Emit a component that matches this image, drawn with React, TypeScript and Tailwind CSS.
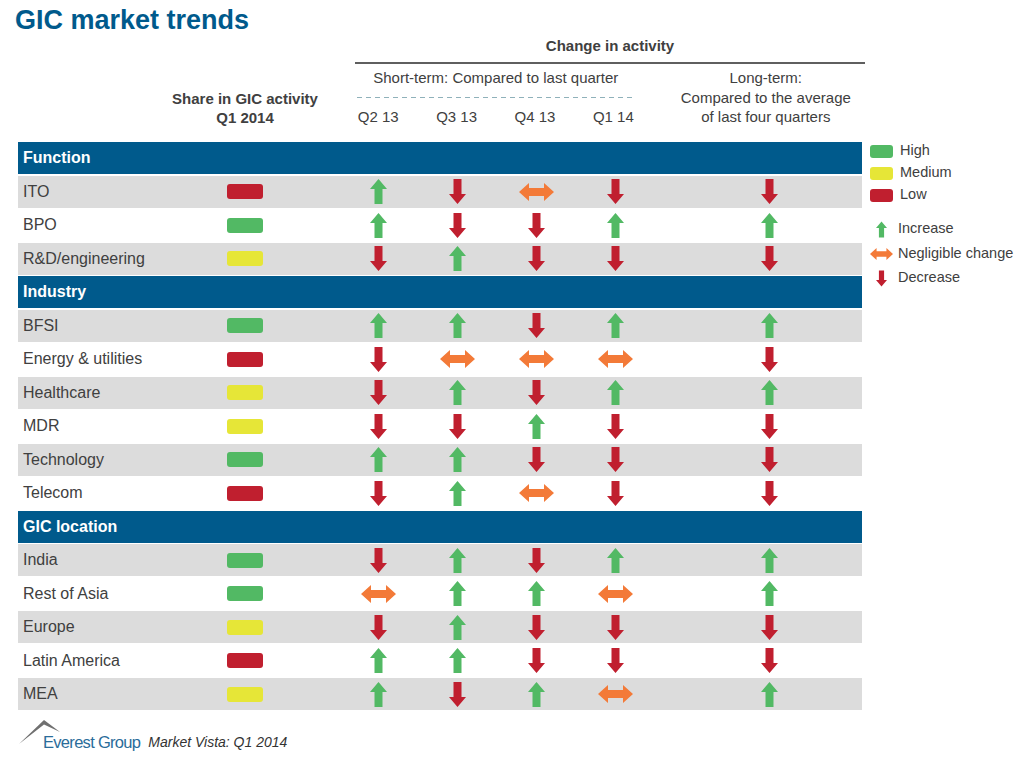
import React from "react";

type Dir = "u" | "d" | "s";
type Level = "high" | "medium" | "low";

const levelColor: Record<Level, string> = {
  high: "bg-[#52b964]",
  medium: "bg-[#e6e637]",
  low: "bg-[#c01f2f]",
};

const sections: { title: string; rows: { name: string; share: Level; q: Dir[]; long: Dir }[] }[] = [
  {
    title: "Function",
    rows: [
      { name: "ITO", share: "low", q: ["u", "d", "s", "d"], long: "d" },
      { name: "BPO", share: "high", q: ["u", "d", "d", "u"], long: "u" },
      { name: "R&D/engineering", share: "medium", q: ["d", "u", "d", "d"], long: "d" },
    ],
  },
  {
    title: "Industry",
    rows: [
      { name: "BFSI", share: "high", q: ["u", "u", "d", "u"], long: "u" },
      { name: "Energy & utilities", share: "low", q: ["d", "s", "s", "s"], long: "d" },
      { name: "Healthcare", share: "medium", q: ["d", "u", "d", "u"], long: "u" },
      { name: "MDR", share: "medium", q: ["d", "d", "u", "d"], long: "d" },
      { name: "Technology", share: "high", q: ["u", "u", "d", "d"], long: "d" },
      { name: "Telecom", share: "low", q: ["d", "u", "s", "d"], long: "d" },
    ],
  },
  {
    title: "GIC location",
    rows: [
      { name: "India", share: "high", q: ["d", "u", "d", "u"], long: "u" },
      { name: "Rest of Asia", share: "high", q: ["s", "u", "u", "s"], long: "u" },
      { name: "Europe", share: "medium", q: ["d", "u", "d", "d"], long: "d" },
      { name: "Latin America", share: "low", q: ["u", "u", "d", "d"], long: "d" },
      { name: "MEA", share: "medium", q: ["u", "d", "u", "s"], long: "u" },
    ],
  },
];

function Arrow({ dir, small = false }: { dir: Dir; small?: boolean }) {
  if (dir === "s") {
    return (
      <svg width={small ? 23 : 35} height={small ? 12 : 18} viewBox="0 0 35 18">
        <path d="M0 9 L10 0 L10 5 L25 5 L25 0 L35 9 L25 18 L25 13 L10 13 L10 18 Z" fill="#f37a38" />
      </svg>
    );
  }
  const up = dir === "u";
  return (
    <svg width={small ? 11 : 17} height={small ? 17 : 25} viewBox="0 0 17 25">
      {up ? (
        <path d="M8.5 0 L17 10 L12.5 10 L12.5 25 L4.5 25 L4.5 10 L0 10 Z" fill="#52b964" />
      ) : (
        <path d="M4.5 0 L12.5 0 L12.5 15 L17 15 L8.5 25 L0 15 L4.5 15 Z" fill="#c01f2f" />
      )}
    </svg>
  );
}

const cols = "grid grid-cols-[190px_74px_57px_79px_79px_79px_79px_74px_80px_1fr]";

export default function App() {
  let stripe = 0;
  return (
    <div className="w-[1024px] h-[768px] bg-white font-['Liberation_Sans',Arial,sans-serif] text-[#404040] overflow-hidden">
      {/* Title */}
      <div className="pl-[15px] pt-[5px] text-[27px] leading-[30px] font-bold text-[#005a8c]">
        GIC market trends
      </div>

      {/* Column headers */}
      <div className="flex h-[107px] pl-[18px] text-[15px]">
        <div className="w-[190px]" />
        <div className="w-[74px] flex flex-col items-center pt-[53.5px] font-bold leading-[19.5px] whitespace-nowrap">
          <div>Share in GIC activity</div>
          <div>Q1 2014</div>
        </div>
        <div className="w-[57px]" />
        <div className="w-[526px]">
          <div className="ml-[16px] w-[510px] text-center font-bold leading-[20px] pt-[1px] pb-[6px] border-b-2 border-[#5f5f5f]">
            Change in activity
          </div>
          <div className="flex">
            <div className="w-[316px]">
              <div className="mt-[4px] text-center leading-[20px] whitespace-nowrap">
                Short-term: Compared to last quarter
              </div>
              <div className="mx-[18px] mt-[9px] h-px bg-[repeating-linear-gradient(90deg,#8fb1ba_0_5px,transparent_5px_9px)]" />
              <div className="grid grid-cols-4 mt-[9px] text-center leading-[20px]">
                <div>Q2 13</div>
                <div>Q3 13</div>
                <div>Q4 13</div>
                <div>Q1 14</div>
              </div>
            </div>
            <div className="ml-[14px] w-[200px] mt-[4px] text-center leading-[19.5px] whitespace-nowrap">
              <div>Long-term:</div>
              <div>Compared to the average</div>
              <div>of last four quarters</div>
            </div>
          </div>
        </div>
      </div>

      {/* Table + legend */}
      <div className="flex pl-[18px]">
        <div className="w-[844px] flex flex-col gap-[1.5px] text-[16px]">
          {sections.map((s) => {
            stripe = 0;
            return (
              <React.Fragment key={s.title}>
                <div className="h-[32px] bg-[#005a8c] text-white font-bold pl-[5px] flex items-center">
                  {s.title}
                </div>
                {s.rows.map((r) => {
                  const gray = stripe++ % 2 === 0;
                  return (
                    <div
                      key={r.name}
                      className={`${cols} h-[32px] items-center ${gray ? "bg-[#dcdcdc]" : "bg-white"}`}
                    >
                      <div className="pl-[5px] whitespace-nowrap">{r.name}</div>
                      <div className="flex justify-center">
                        <div className={`w-[36px] h-[15px] rounded-[3px] ${levelColor[r.share]}`} />
                      </div>
                      <div />
                      {r.q.map((d, i) => (
                        <div key={i} className="flex justify-center">
                          <Arrow dir={d} />
                        </div>
                      ))}
                      <div />
                      <div className="flex justify-center">
                        <Arrow dir={r.long} />
                      </div>
                      <div />
                    </div>
                  );
                })}
              </React.Fragment>
            );
          })}
        </div>

        {/* Legend */}
        <div className="ml-[6px] mt-[-2px] text-[14.5px]">
          {(["high", "medium", "low"] as Level[]).map((l) => (
            <div key={l} className="h-[22px] flex items-center pl-[2px]">
              <div className={`w-[23px] h-[13px] rounded-[3px] ${levelColor[l]}`} />
              <span className="ml-[7px] capitalize">{l}</span>
            </div>
          ))}
          <div className="mt-[11px]">
            {([
              ["u", "Increase"],
              ["s", "Negligible change"],
              ["d", "Decrease"],
            ] as [Dir, string][]).map(([d, t]) => (
              <div key={t} className="h-[24.5px] flex items-center">
                <div className="w-[26px] flex justify-center">
                  <Arrow dir={d} small />
                </div>
                <span className="ml-[4px] whitespace-nowrap">{t}</span>
              </div>
            ))}
          </div>
        </div>
      </div>

      {/* Footer */}
      <div className="flex items-end pl-[19px] mt-[10px]">
        <div className="relative pl-[24px] pt-[12px]">
          <svg className="absolute left-0 top-0" width="42" height="25" viewBox="0 0 42 25">
            <path d="M0 24 L25 0 L41 12 L25 4.5 Z" fill="#707070" />
          </svg>
          <div className="text-[16.5px] leading-[20px] tracking-[-0.7px] text-[#2a6c9a]">Everest Group</div>
        </div>
        <div className="ml-[8px] text-[14px] leading-[20px] italic text-[#333333]">Market Vista: Q1 2014</div>
      </div>
    </div>
  );
}
